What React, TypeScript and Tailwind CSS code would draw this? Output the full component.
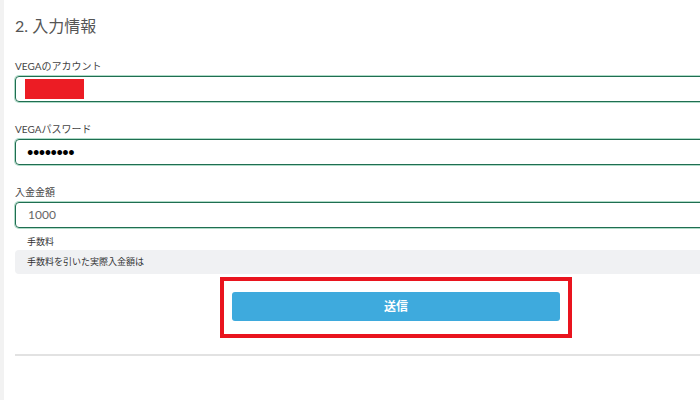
const font = { fontFamily: 'Lato, "Noto Sans CJK JP", sans-serif' };

function Field({ label, children, className = "" }: { label: string; children: React.ReactNode; className?: string }) {
  return (
    <div className={className}>
      <div className="text-[10px] leading-[14px] text-[#444]">{label}</div>
      <div className="mt-[3px] flex h-[26px] items-center rounded-[4px] border border-[#1f6e51] pl-[9px] shadow-[0_0_0_1px_rgba(110,190,155,0.55)]">
        {children}
      </div>
    </div>
  );
}

export default function App() {
  return (
    <div className="flex h-[400px] w-[700px] overflow-hidden bg-white" style={font}>
      <div className="w-[4px] shrink-0 bg-[#f2f2f2]" />
      <div className="w-[762px] shrink-0 pl-[11px]">
        <div className="w-[762px]">
          <h2 className="mt-[16px] text-[16px] leading-[20px] text-[#555]">2. 入力情報</h2>

          <Field label="VEGAのアカウント" className="mt-[23px]">
            <div className="h-[20px] w-[59px] bg-[#ec1c24]" />
          </Field>

          <Field label="VEGAパスワード" className="mt-[20px]">
            <span className="pl-[2px] text-[11px] font-bold tracking-[-0.5px] text-black">••••••••</span>
          </Field>

          <Field label="入金金額" className="mt-[20px]">
            <span className="pl-[3px] text-[12px] text-[#666]">1000</span>
          </Field>

          <div className="mt-[7px] pl-[12px] text-[9px] leading-[14px] text-[#333]">手数料</div>
          <div className="mt-[1px] flex h-[24px] items-center rounded-[4px] bg-[#f0f1f3] pl-[12px] text-[9px] text-[#333]">
            手数料を引いた実際入金額は
          </div>

          <div className="mt-[3px] flex justify-center">
            <div className="w-[352px] border-[4px] border-[#e9141e] px-[8px] pb-[13px] pt-[11px]">
              <button className="flex h-[29px] w-full items-center justify-center rounded-[3px] bg-[#3eaadd] text-[12px] font-bold text-white">
                送信
              </button>
            </div>
          </div>

          <div className="mt-[16px] h-[2px] bg-[#e2e2e2]" />
        </div>
      </div>
    </div>
  );
}
